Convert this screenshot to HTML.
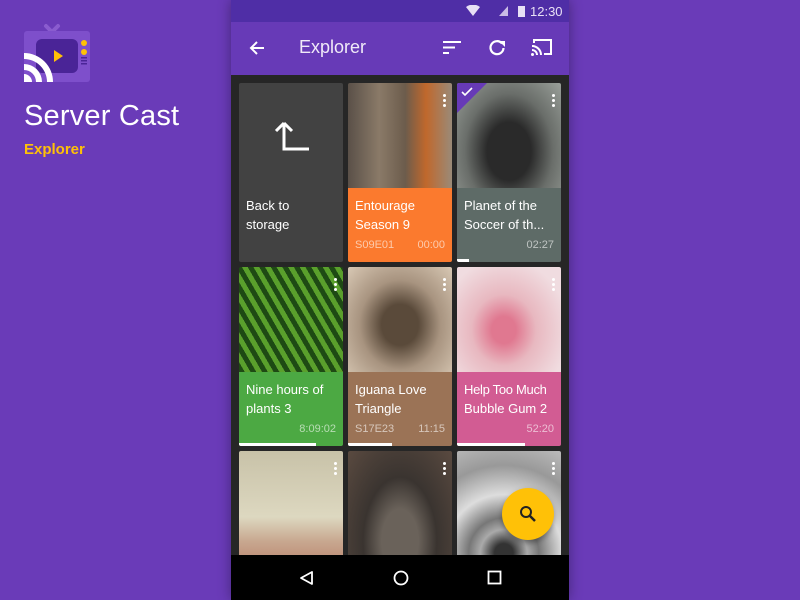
<!DOCTYPE html>
<html><head><style>
*{margin:0;padding:0;box-sizing:border-box}
body{width:800px;height:600px;overflow:hidden;background:#6a3bb8;font-family:"Liberation Sans",sans-serif;position:relative}
.phone{position:absolute;left:231px;top:0;width:338px;height:600px;background:#262626;overflow:hidden;box-shadow:0 0 12px rgba(0,0,0,.35)}
.status{position:absolute;top:0;left:0;width:338px;height:22px;background:#4f2ea6;color:#e8e0f5;font-size:13px}
.appbar{position:absolute;top:22px;left:0;width:338px;height:53px;background:#673ab7;color:#fff}
.card{position:absolute;width:104px;border-radius:2px;overflow:hidden}
.img{position:absolute;left:0;top:0;width:104px;height:105px}
.cap{position:absolute;left:0;top:105px;width:104px;height:74px;color:#fff;font-size:13px;line-height:19px;padding:5px 7px;white-space:nowrap}
.meta{position:absolute;bottom:7px;left:7px;right:7px;font-size:11px;color:rgba(255,255,255,.6);display:flex;justify-content:space-between}
.prog{position:absolute;left:0;bottom:0;height:3px;background:#fff}
.dots{position:absolute;right:6px;top:11px;width:3px}
.dots i{display:block;width:3px;height:3px;border-radius:50%;background:#fff;margin-bottom:2px}
.nav{position:absolute;left:0;top:555px;width:338px;height:45px;background:#000}
</style></head><body>
<svg style="position:absolute;left:22px;top:22px" width="70" height="62" viewBox="0 0 70 62">
<path d="M24 4l6 6 6-6" stroke="#8a5ccf" stroke-width="4" fill="none" stroke-linecap="round"/>
<rect x="2" y="9" width="66" height="51" rx="3" fill="#7e4fcb"/>
<rect x="14" y="17" width="42" height="34" rx="6" fill="#4a2497"/>
<path d="M32 28l9 6-9 6z" fill="#ffc107"/>
<circle cx="62" cy="21" r="3" fill="#ffc107"/><circle cx="62" cy="30" r="3" fill="#ffc107"/>
<rect x="59" y="35" width="6" height="1.5" fill="#4a2497"/><rect x="59" y="38" width="6" height="1.5" fill="#4a2497"/><rect x="59" y="41" width="6" height="1.5" fill="#4a2497"/>
<path d="M2 31a29 29 0 0 1 29 29h-6a23 23 0 0 0-23-23z M2 42a18 18 0 0 1 18 18h-6a12 12 0 0 0-12-12z M2 52a8 8 0 0 1 8 8h-8z" fill="#fff"/>
</svg>
<div style="position:absolute;left:24px;top:100px;color:#fff;font-size:29px;letter-spacing:.2px">Server Cast</div>
<div style="position:absolute;left:24px;top:141px;color:#ffc107;font-size:15px;font-weight:bold">Explorer</div>

<div class="phone">
<div class="status">
<svg style="position:absolute;left:235px;top:5px" width="80" height="13"><path d="M0 2q7-5 14 0l-7 9z" fill="#e8e0f5"/><path d="M33 11l9-10v10z" fill="#e8e0f5" opacity=".8"/><rect x="52" y="1" width="7" height="11" fill="#e8e0f5"/></svg>
<span style="position:absolute;left:299px;top:4px">12:30</span>
</div>
<div class="appbar">
<svg style="position:absolute;left:18px;top:18px" width="16" height="16"><path d="M15 8H2M8 2L2 8l6 6" stroke="#fff" stroke-width="2" fill="none"/></svg>
<span style="position:absolute;left:68px;top:15px;font-size:18px;color:#f0eaf8">Explorer</span>
<svg style="position:absolute;left:212px;top:19px" width="18" height="14"><path d="M0 1h18M0 6.5h12M0 12h6" stroke="#fff" stroke-width="2"/></svg>
<svg style="position:absolute;left:257px;top:17px" width="18" height="18" viewBox="0 0 18 18"><path d="M14 4.5A6.5 6.5 0 1 0 15.5 9" stroke="#fff" stroke-width="2.2" fill="none"/><path d="M11 2h6v6z" fill="#fff"/></svg>
<svg style="position:absolute;left:300px;top:16px" width="22" height="18" viewBox="0 0 22 18"><path d="M3 5V2h17v14h-7" stroke="#fff" stroke-width="2" fill="none"/><path d="M1 8a9 9 0 0 1 9 9M1 12a5 5 0 0 1 5 5" stroke="#fff" stroke-width="2" fill="none"/><circle cx="1.5" cy="16.5" r="1.5" fill="#fff"/></svg>
</div>

<div class="card" style="left:8px;top:83px;height:179px;background:#424242">
<svg style="position:absolute;left:34px;top:36px" width="38" height="34"><path d="M11 4L3 12M11 4l8 8M11 4v26h25" stroke="#fff" stroke-width="3" fill="none"/></svg>
<div class="cap" style="background:none;padding-top:8px">Back to<br>storage</div>
</div>
<div class="card" style="left:117px;top:83px;height:179px">
<div class="img" style="background:linear-gradient(90deg,#5a5048 0%,#8a7a68 30%,#6c5c4c 55%,#c0682c 75%,#9a8a78 100%)"></div>
<div class="dots"><i></i><i></i><i></i></div>
<div class="cap" style="background:#fb7a2e;padding-top:8px">Entourage<br>Season 9<div class="meta"><span>S09E01</span><span>00:00</span></div></div>
</div>
<div class="card" style="left:226px;top:83px;height:179px">
<div class="img" style="background:radial-gradient(ellipse at 50% 65%,#2a2a2a 30%,#6a6e6a 60%,#9aa09a 100%)"></div>
<div style="position:absolute;left:0;top:0;width:0;height:0;border-top:30px solid #673ab7;border-right:30px solid transparent"></div>
<svg style="position:absolute;left:4px;top:4px" width="12" height="10"><path d="M1 5l3 3 7-7" stroke="#fff" stroke-width="1.6" fill="none"/></svg>
<div class="dots"><i></i><i></i><i></i></div>
<div class="cap" style="background:#5e6b67;padding-top:8px">Planet of the<br>Soccer of th...<div class="meta"><span></span><span>02:27</span></div><div class="prog" style="width:12px"></div></div>
</div>

<div class="card" style="left:8px;top:267px;height:179px">
<div class="img" style="background:repeating-linear-gradient(60deg,#1e4a14 0 5px,#5aa02c 5px 10px)"></div>
<div class="dots"><i></i><i></i><i></i></div>
<div class="cap" style="background:#4ca943;padding-top:8px">Nine hours of<br>plants 3<div class="meta"><span></span><span>8:09:02</span></div><div class="prog" style="width:77px"></div></div>
</div>
<div class="card" style="left:117px;top:267px;height:179px">
<div class="img" style="background:radial-gradient(ellipse at 50% 55%,#5a4a3a 25%,#a89480 55%,#d8c8b4 100%)"></div>
<div class="dots"><i></i><i></i><i></i></div>
<div class="cap" style="background:#9b7356;padding-top:8px">Iguana Love<br>Triangle<div class="meta"><span>S17E23</span><span>11:15</span></div><div class="prog" style="width:44px"></div></div>
</div>
<div class="card" style="left:226px;top:267px;height:179px">
<div class="img" style="background:radial-gradient(ellipse at 45% 60%,#e07890 15%,#e8b8c0 40%,#f0dce0 80%)"></div>
<div class="dots"><i></i><i></i><i></i></div>
<div class="cap" style="background:#d25c93;padding-top:8px"><span style="letter-spacing:-.3px">Help Too Much</span><br>Bubble Gum 2<div class="meta"><span></span><span>52:20</span></div><div class="prog" style="width:68px"></div></div>
</div>

<div class="card" style="left:8px;top:451px;height:120px;background:linear-gradient(180deg,#c8c2a8 0%,#ddd8c0 55%,#c8a890 75%,#b8806a 100%)"><div class="dots"><i></i><i></i><i></i></div></div>
<div class="card" style="left:117px;top:451px;height:120px;background:radial-gradient(ellipse at 50% 75%,#6a625a 25%,#3a3430 50%,#5a4a40 100%)"><div class="dots"><i></i><i></i><i></i></div></div>
<div class="card" style="left:226px;top:451px;height:120px;background:radial-gradient(circle at 45% 85%,#333 8%,#aaa 20%,#777 30%,#ddd 50%,#999 75%,#bbb 100%)"><div class="dots"><i></i><i></i><i></i></div></div>

<div style="position:absolute;left:271px;top:488px;width:52px;height:52px;border-radius:50%;background:#ffc107;box-shadow:0 3px 6px rgba(0,0,0,.35)">
<svg style="position:absolute;left:17px;top:17px" width="18" height="18"><circle cx="7" cy="7" r="5" stroke="#222" stroke-width="2" fill="none"/><path d="M11 11l5 5" stroke="#222" stroke-width="2.5"/></svg>
</div>

<div class="nav">
<svg style="position:absolute;left:68px;top:15px" width="16" height="16"><path d="M13 2v12L2 8z" stroke="#fff" stroke-width="1.8" fill="none" stroke-linejoin="round"/></svg>
<svg style="position:absolute;left:161px;top:14px" width="18" height="18"><circle cx="9" cy="9" r="6.5" stroke="#fff" stroke-width="1.8" fill="none"/></svg>
<svg style="position:absolute;left:256px;top:15px" width="16" height="16"><rect x="1.5" y="1.5" width="12" height="12" stroke="#fff" stroke-width="1.8" fill="none"/></svg>
</div>
</div>
</body></html>
